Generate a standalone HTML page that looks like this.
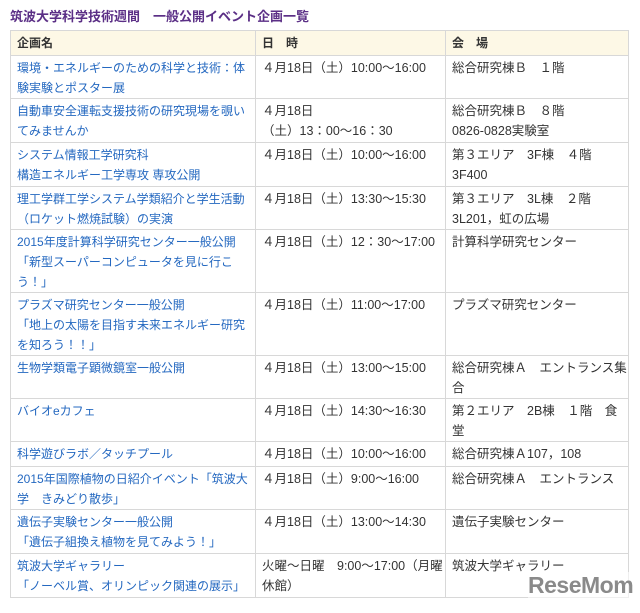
<!DOCTYPE html>
<html><head><meta charset="utf-8"><style>
body{margin:0;background:#fff;width:640px;height:613px;overflow:hidden;font-family:"Liberation Sans","Noto Sans CJK JP",sans-serif;}
h1{position:absolute;left:10px;top:9px;margin:0;font-size:13px;font-weight:bold;color:#5b2f86;line-height:16px;}
table{position:absolute;left:10px;top:30px;border-collapse:collapse;width:618px;table-layout:fixed;font-size:12px;line-height:20px;}
td,th{border:1px solid #d8d8d8;vertical-align:top;padding:2px 5px 0 6px;text-align:left;color:#333;overflow:hidden;}
td:nth-child(2),td:nth-child(3){font-size:12.5px;}
.nw{white-space:nowrap;}
th{background:#fdf8e6;font-weight:bold;height:22px;padding-top:2px;}
td a{color:#2468c0;text-decoration:none;}
.logo{position:absolute;left:528px;top:572px;font-size:23px;font-weight:bold;color:#8a8a8a;letter-spacing:-0.5px;background:rgba(255,255,255,0.6);}
</style></head><body>
<h1>筑波大学科学技術週間　一般公開イベント企画一覧</h1>
<table>
<colgroup><col style="width:245px"><col style="width:190px"><col style="width:183px"></colgroup>
<tr><th>企画名</th><th>日　時</th><th>会　場</th></tr>
<tr style="height:43px"><td><a>環境・エネルギーのための科学と技術：体験実験とポスター展</a></td><td>４月18日（土）10:00〜16:00</td><td>総合研究棟Ｂ　１階</td></tr>
<tr style="height:44px"><td><a>自動車安全運転支援技術の研究現場を覗いてみませんか</a></td><td>４月18日<br>（土）13：00〜16：30</td><td>総合研究棟Ｂ　８階<br>0826-0828実験室</td></tr>
<tr style="height:44px"><td><a>システム情報工学研究科<br>構造エネルギー工学専攻 専攻公開</a></td><td>４月18日（土）10:00〜16:00</td><td>第３エリア　3F棟　４階<br>3F400</td></tr>
<tr style="height:43px"><td><a>理工学群工学システム学類紹介と学生活動<br>（ロケット燃焼試験）の実演</a></td><td>４月18日（土）13:30〜15:30</td><td>第３エリア　3L棟　２階<br>3L201，虹の広場</td></tr>
<tr style="height:62px"><td><a>2015年度計算科学研究センター一般公開<br>「新型スーパーコンピュータを見に行こう！」</a></td><td>４月18日（土）12：30〜17:00</td><td>計算科学研究センター</td></tr>
<tr style="height:62px"><td><a>プラズマ研究センター一般公開<br>「地上の太陽を目指す未来エネルギー研究を知ろう！！」</a></td><td>４月18日（土）11:00〜17:00</td><td>プラズマ研究センター</td></tr>
<tr style="height:43px"><td><a>生物学類電子顕微鏡室一般公開</a></td><td>４月18日（土）13:00〜15:00</td><td class="nw">総合研究棟Ａ　エントランス集<br>合</td></tr>
<tr style="height:43px"><td><a>バイオeカフェ</a></td><td>４月18日（土）14:30〜16:30</td><td class="nw">第２エリア　2B棟　１階　食<br>堂</td></tr>
<tr style="height:25px"><td><a>科学遊びラボ／タッチプール</a></td><td>４月18日（土）10:00〜16:00</td><td>総合研究棟Ａ107，108</td></tr>
<tr style="height:43px"><td><a>2015年国際植物の日紹介イベント「筑波大学　きみどり散歩」</a></td><td>４月18日（土）9:00〜16:00</td><td>総合研究棟Ａ　エントランス</td></tr>
<tr style="height:44px"><td><a>遺伝子実験センター一般公開<br>「遺伝子組換え植物を見てみよう！」</a></td><td>４月18日（土）13:00〜14:30</td><td>遺伝子実験センター</td></tr>
<tr style="height:44px"><td><a>筑波大学ギャラリー<br>「ノーベル賞、オリンピック関連の展示」</a></td><td class="nw">火曜〜日曜　9:00〜17:00（月曜<br>休館）</td><td>筑波大学ギャラリー</td></tr>
</table>
<div class="logo">ReseMom</div>
</body></html>
